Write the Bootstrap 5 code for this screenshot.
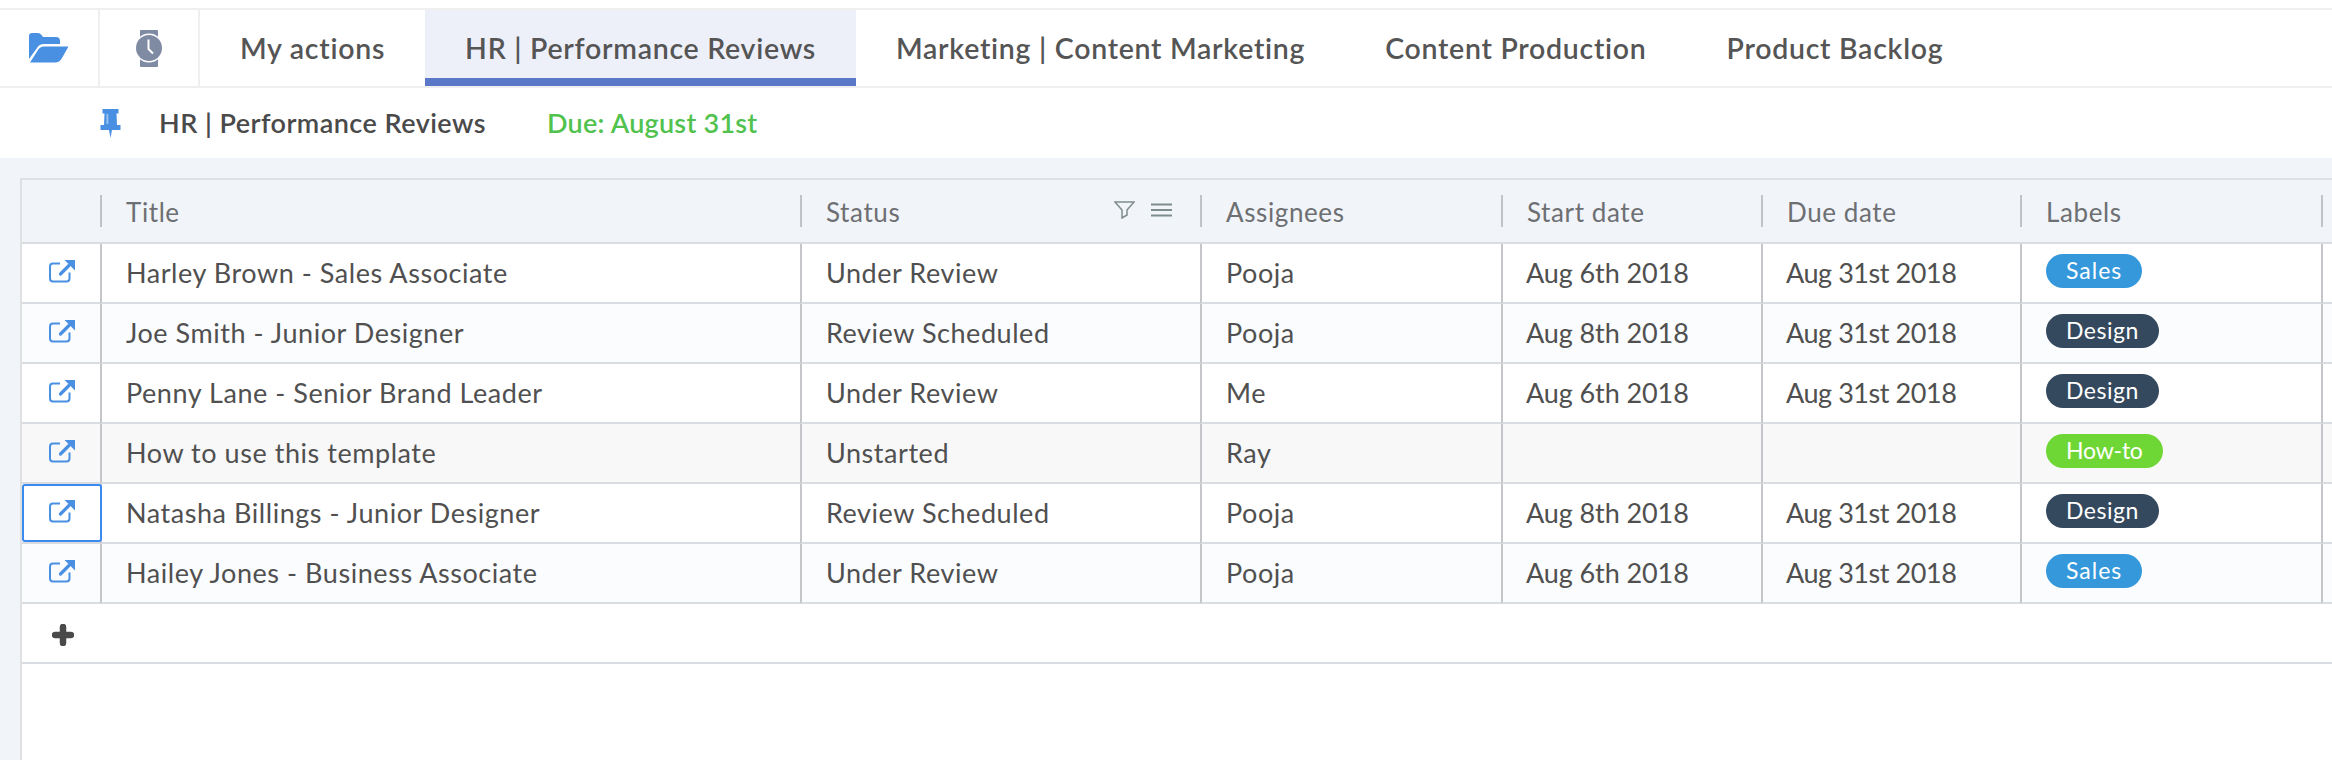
<!DOCTYPE html>
<html>
  <head>
    <meta charset="utf-8" />
    <link
      rel="stylesheet"
      href="https://cdn.jsdelivr.net/npm/bootstrap@5.3.2/dist/css/bootstrap.min.css"
    />
    <title>HR | Performance Reviews</title>
    <style>
      html, body { height: 760px; overflow: hidden; }
      body { font-family: Lato, "Liberation Sans", sans-serif; color: #4a4a4a; background: #fff; padding-top: 8px; }

      .tabbar { height: 80px; border-top: 2px solid #efefef; border-bottom: 2px solid #efefef; }
      .icon-tab { width: 100px; border-right: 2px solid #efefef; }
      .page-tab { padding: 0 40px; font-size: 28.5px; letter-spacing: 0.72px; font-weight: 600; color: #555; border-bottom: 8px solid transparent; border-top: 8px solid transparent; }
      .page-tab.current { background: #edf0f9; border-bottom-color: #5b77c7; border-top-color: #edf0f9; }

      .pinbar { height: 70px; font-size: 27px; letter-spacing: 0.45px; font-weight: 600; }
      .pin-icon { margin-left: 100px; margin-right: 38px; }
      .due-text { color: #52c24f; margin-left: 61px; letter-spacing: 0.25px; }

      .sheet-wrap { height: 602px; background: #f1f4f9; padding: 20px 0 0 20px; }
      .sheet-box { height: 582px; background: #fff; border-left: 2px solid #dfe0e2; border-top: 2px solid #dfe0e2; }
      .sheet { width: 2310px; table-layout: fixed; border-collapse: separate; border-spacing: 0; margin: 0; --bs-table-bg: transparent; font-size: 27px; letter-spacing: 0.55px; }
      .sheet th, .sheet td { padding: 0; border: 0; border-bottom: 2px solid #d9dce0; vertical-align: middle; color: #505050; font-weight: 400; box-shadow: none; }
      .sheet thead th { height: 64px; --bs-table-bg: #f1f4f9; color: #6d6f72; font-size: 26px; letter-spacing: 0.6px; }
      .head-cell { height: 32px; border-left: 2px solid #bfc3c7; padding-left: 24px; padding-right: 28px; display: flex; align-items: center; justify-content: space-between; }
      .head-label { margin-top: 2px; }
      .head-tools { margin-bottom: 3px; }
      .sheet td { height: 60px; border-left: 2px solid #c4c6c9; padding-left: 24px; white-space: nowrap; }
      .sheet td.start-cell { letter-spacing: -0.1px; padding-left: 23px; }
      .sheet td.due-cell { letter-spacing: -0.45px; padding-left: 23px; }
      .sheet td.open-cell { border-left: 0; padding-left: 27px; position: relative; }
      .sheet td.open-cell svg { display: block; margin-top: -4px; }
      .alt-row td { --bs-table-bg: #fbfcfe; }
      .howto-row td { --bs-table-bg: #f8f8f8; }
      .picked::after { content: ""; position: absolute; left: 0; right: -2px; top: 0; bottom: 0; border: 2px solid #3b8af0; border-radius: 3px; }
      .sheet td.add-cell { border-left: 0; padding-left: 30px; }
      .add-cell svg { margin-top: 4px; }

      .tag { font-size: 23px; letter-spacing: 0.3px; font-weight: 400; height: 34px; line-height: 32px; padding: 0 20px; margin-bottom: 10px; }
      .tag-sales { background: #3498db; letter-spacing: 1px; }
      .tag-design { background: #34495e; letter-spacing: 0.5px; }
      .tag-howto { background: #6fd735; letter-spacing: -0.2px; }
    </style>
  </head>
  <body>
    <div class="tabbar d-flex">
      <div class="icon-tab d-flex align-items-center justify-content-center">
        <svg width="40" height="30" viewBox="0 0 40 30" fill="#4a90e2">
          <path d="M0 26V3Q0 0 3 0H9Q11 0 12.5 2L14 4H27Q31 4 31 8V11H15Q10 11 8 15Z" />
          <path d="M1 29.5 9 17Q11 13.5 15 13.5H39.5L33 25Q30.5 29.5 26 29.5Z" />
        </svg>
      </div>
      <div class="icon-tab d-flex align-items-center justify-content-center">
        <svg width="26" height="37" viewBox="0 0 26 37">
          <rect x="4" y="0" width="18" height="37" rx="1" fill="#7f8aa3" />
          <circle cx="13" cy="18" r="14.5" fill="#fff" />
          <circle cx="13" cy="18" r="13" fill="#7f8aa3" />
          <path d="M12.500 9.500V19L17 23.500" fill="none" stroke="#fff" stroke-width="2" />
        </svg>
      </div>
      <div class="page-tab d-flex align-items-center">My actions</div>
      <div class="page-tab current d-flex align-items-center">HR | Performance Reviews</div>
      <div class="page-tab d-flex align-items-center">Marketing | Content Marketing</div>
      <div class="page-tab d-flex align-items-center">Content Production</div>
      <div class="page-tab d-flex align-items-center">Product Backlog</div>
    </div>

    <div class="pinbar d-flex align-items-center">
      <svg class="pin-icon" width="21" height="30" viewBox="0 0 21 30" fill="#4a90e2">
        <path d="M2.500 1H18.500V5.500H16.500L17 17H20.500V22H12L10.500 30 9 22H0.500V17H4L4.500 5.500H2.500Z" />
        <rect x="6.500" y="6" width="1.800" height="10" fill="#9cc3f0" />
      </svg>
      <span>HR | Performance Reviews</span>
      <span class="due-text">Due: August 31st</span>
    </div>

    <div class="sheet-wrap">
      <div class="sheet-box">
        <table class="table sheet">
          <colgroup>
            <col style="width: 78px" />
            <col style="width: 700px" />
            <col style="width: 400px" />
            <col style="width: 301px" />
            <col style="width: 260px" />
            <col style="width: 259px" />
            <col style="width: 301px" />
            <col style="width: 11px" />
          </colgroup>
          <thead>
            <tr>
              <th></th>
              <th><div class="head-cell"><span class="head-label">Title</span></div></th>
              <th>
                <div class="head-cell">
                  <span class="head-label">Status</span>
                  <span class="head-tools d-flex align-items-center gap-3">
                    <svg width="21" height="18" viewBox="0 0 21 18" fill="none" stroke="#7f8c8d" stroke-width="1.500"><path d="M1 1H20L13 9V14L8 17V9Z" /></svg>
                    <svg width="21" height="14" viewBox="0 0 21 14" stroke="#7f8c8d" stroke-width="2"><path d="M0 1.500H21M0 7H21M0 12.500H21" /></svg>
                  </span>
                </div>
              </th>
              <th><div class="head-cell"><span class="head-label">Assignees</span></div></th>
              <th><div class="head-cell"><span class="head-label">Start date</span></div></th>
              <th><div class="head-cell"><span class="head-label">Due date</span></div></th>
              <th><div class="head-cell"><span class="head-label">Labels</span></div></th>
              <th><div class="head-cell"></div></th>
            </tr>
          </thead>
          <tbody id="rows"></tbody>
        </table>
      </div>
    </div>

    <script src="https://cdn.jsdelivr.net/npm/bootstrap@5.3.2/dist/js/bootstrap.bundle.min.js"></script>
    <script>
      const linhas = [
        ["Harley Brown - Sales Associate", "Under Review", "Pooja", "Aug 6th 2018", "Aug 31st 2018", "Sales", "tag-sales", ""],
        ["Joe Smith - Junior Designer", "Review Scheduled", "Pooja", "Aug 8th 2018", "Aug 31st 2018", "Design", "tag-design", "alt-row"],
        ["Penny Lane - Senior Brand Leader", "Under Review", "Me", "Aug 6th 2018", "Aug 31st 2018", "Design", "tag-design", ""],
        ["How to use this template", "Unstarted", "Ray", "", "", "How-to", "tag-howto", "howto-row"],
        ["Natasha Billings - Junior Designer", "Review Scheduled", "Pooja", "Aug 8th 2018", "Aug 31st 2018", "Design", "tag-design", ""],
        ["Hailey Jones - Business Associate", "Under Review", "Pooja", "Aug 6th 2018", "Aug 31st 2018", "Sales", "tag-sales", "alt-row"],
      ];

      const abrir = `<svg width="26" height="24" viewBox="0 0 26 24" fill="none">
        <path d="M20.500 13.500V19.500Q20.500 22.500 17.500 22.500H4Q1 22.500 1 19.500V7.500Q1 4.500 4 4.500H11" stroke="#4a90e2" stroke-width="2" />
        <path d="M11.500 15 20 6.500" stroke="#4a90e2" stroke-width="3.200" stroke-linecap="round" />
        <path d="M15.500 1H26V11.500Z" fill="#4a90e2" />
      </svg>`;

      let html = "";
      linhas.forEach((l, i) => {
        html += `<tr class="${l[7]}">
          <td class="open-cell ${i === 4 ? "picked" : ""}">${abrir}</td>
          <td>${l[0]}</td><td>${l[1]}</td><td>${l[2]}</td><td class="start-cell">${l[3]}</td><td class="due-cell">${l[4]}</td>
          <td><span class="badge rounded-pill tag ${l[6]}">${l[5]}</span></td>
          <td></td>
        </tr>`;
      });
      html += `<tr><td class="add-cell" colspan="8">
        <svg class="d-block" width="22" height="22" viewBox="0 0 22 22"><path d="M11 3V19M3 11H19" stroke="#4a4a4a" stroke-width="6.500" stroke-linecap="round" /></svg>
      </td></tr>`;
      document.getElementById("rows").innerHTML = html;
    </script>
  </body>
</html>
